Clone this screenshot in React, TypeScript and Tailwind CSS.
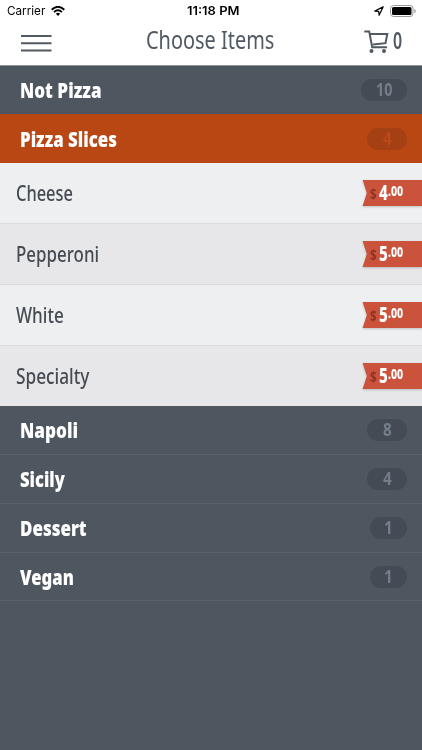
import { useLayoutEffect, useRef, useState } from 'react';

type FitProps = { text: string; width: number; className?: string };

// Condenses a label horizontally so that it fills the given width.
function Fit({ text, width, className = '' }: FitProps) {
  const ref = useRef<HTMLSpanElement>(null);
  const [scale, setScale] = useState(1);
  useLayoutEffect(() => {
    if (ref.current) setScale(width / ref.current.offsetWidth);
  }, [text, width]);
  return (
    <span className={'block shrink-0 whitespace-nowrap ' + className} style={{ width }}>
      <span ref={ref} className="inline-block origin-left" style={{ transform: `scaleX(${scale})` }}>
        {text}
      </span>
    </span>
  );
}

type Category = { name: string; width: number; count: string; row: string; badge: string; countWidth: number };

const before: Category[] = [
  { name: 'Not Pizza', width: 82, count: '10', row: 'h-12 bg-[#4e565f]', badge: 'w-[46px] bg-[#444b54] text-[#747e89]', countWidth: 16 },
  { name: 'Pizza Slices', width: 97, count: '4', row: 'h-[49px] bg-[#b94714]', badge: 'w-[40px] bg-[#a44014] text-[#bd4918]', countWidth: 9 },
];

const after: Category[] = [
  { name: 'Napoli', width: 58, count: '8', row: 'h-[49px] border-b border-[#59616a]', badge: 'w-[40px] bg-[#444b54] text-[#747e89]', countWidth: 9 },
  { name: 'Sicily', width: 45, count: '4', row: 'h-[49px] border-b border-[#59616a]', badge: 'w-[40px] bg-[#444b54] text-[#747e89]', countWidth: 9 },
  { name: 'Dessert', width: 67, count: '1', row: 'h-[49px] border-b border-[#59616a]', badge: 'w-[37px] bg-[#444b54] text-[#747e89]', countWidth: 9 },
  { name: 'Vegan', width: 54, count: '1', row: 'h-12 border-b border-[#59616a]', badge: 'w-[37px] bg-[#444b54] text-[#747e89]', countWidth: 9 },
];

const items = [
  { name: 'Cheese', width: 57, dollars: '4', row: 'h-[61px] bg-[#eeeff1] border-b border-[#dadbdd]' },
  { name: 'Pepperoni', width: 83, dollars: '5', row: 'h-[61px] bg-[#e7e7e9] border-b border-[#d9dadc]' },
  { name: 'White', width: 48, dollars: '5', row: 'h-[61px] bg-[#eeeff1] border-b border-[#dadbdd]' },
  { name: 'Specialty', width: 73, dollars: '5', row: 'h-[60px] bg-[#e7e7e9]' },
];

function CategoryRow({ c }: { c: Category }) {
  return (
    <div className={'flex items-center justify-between pl-5 pr-[15px] ' + c.row}>
      <Fit text={c.name} width={c.width} className="text-[21px] leading-[30px] font-black text-white" />
      <span className={'flex h-[22px] items-center justify-center rounded-full ' + c.badge}>
        <Fit text={c.count} width={c.countWidth} className="text-[17px] leading-[22px] font-bold" />
      </span>
    </div>
  );
}

function PriceTag({ dollars }: { dollars: string }) {
  return (
    <div className="h-[26px] w-[60px] drop-shadow-[0_1px_1px_rgba(0,0,0,0.2)]">
      <div className="flex h-[26px] items-start bg-[#cb523b] pl-2 [clip-path:polygon(1%_0,100%_0,100%_100%,1%_100%,8%_50%)]">
        <Fit text="$" width={7} className="mt-1 text-[15px] leading-[18px] font-bold text-[#8b3526]" />
        <Fit text={dollars} width={9} className="ml-[1.5px] text-[22px] leading-[23px] font-extrabold text-white" />
        <Fit text=".00" width={15} className="mt-px text-[14px] leading-[19px] font-extrabold text-white" />
      </div>
    </div>
  );
}

export default function App() {
  return (
    <div className="flex h-[750px] w-[422px] flex-col overflow-hidden bg-[#4e565f] font-['Noto_Sans',sans-serif]">
      <header className="h-[66px] shrink-0 border-b border-[#8e9598] bg-white">
        <div className="grid h-[22px] grid-cols-3 items-center pl-[7px] pr-[6px] font-['Inter',sans-serif] text-black">
          <div className="flex items-center gap-[6px]">
            <Fit text="Carrier" width={38} className="text-[12px] leading-4" />
            <svg className="h-[10px] w-[14px]" viewBox="0 0 14 10" fill="none" stroke="currentColor">
              <path d="M.7 3.7Q7-2 13.3 3.7M3 6.1Q7 2.6 11 6.1" strokeWidth="1.9" />
              <path d="M4.9 7.7Q7 6 9.1 7.7L7 9.9Z" fill="currentColor" stroke="none" />
            </svg>
          </div>
          <div className="flex justify-center pl-1">
            <Fit text="11:18 PM" width={53} className="text-[12px] leading-4 font-semibold" />
          </div>
          <div className="flex items-center justify-end gap-[6px]">
            <svg className="h-[10px] w-[10px]" viewBox="0 0 10 10" fill="none" stroke="currentColor" strokeWidth="1.2" strokeLinejoin="round">
              <path d="M9.2.8.8 5.1 4.7 5.4 5.1 9.2Z" />
            </svg>
            <svg className="h-3 w-[26px]" viewBox="0 0 26 12">
              <rect x=".5" y=".5" width="22.5" height="11" rx="3" fill="white" stroke="#999" />
              <rect x="2" y="2" width="19.5" height="8" rx="1.5" />
              <path d="M24.3 4Q25.8 4.3 25.8 6T24.3 8Z" fill="#999" />
            </svg>
          </div>
        </div>
        <div className="flex h-[43px] items-start justify-between pl-5 pr-5 text-[#515962]">
          <svg className="mt-[12px] h-[18px] w-[93px] shrink-0" viewBox="0 0 93 18" stroke="currentColor" strokeWidth="2">
            <path d="M1 2H31.5M1 9.2H31.5M1 16.4H31.5" />
          </svg>
          <Fit text="Choose Items" width={128} className="text-[26px] leading-[35px] font-normal" />
          <div className="flex w-[95px] items-start justify-end gap-1">
            <svg className="mt-[8px] h-[24px] w-[25px]" viewBox="0 0 25 24" fill="none" stroke="currentColor" strokeWidth="2">
              <path d="M.3 1.4H5.2L8.2 17.2H23M6 4H23.3L21.5 13.2L9 14.5" />
              <circle cx="7.5" cy="21" r="2" fill="currentColor" stroke="none" />
              <circle cx="20" cy="21" r="2" fill="currentColor" stroke="none" />
            </svg>
            <Fit text="0" width={9} className="mt-[3px] text-[23px] leading-[30px] font-semibold" />
          </div>
        </div>
      </header>
      <nav className="flex flex-col">
        {before.map((c) => <CategoryRow key={c.name} c={c} />)}
        <div>
          {items.map((item) => (
            <div key={item.name} className={'flex items-center justify-between pl-4 ' + item.row}>
              <Fit text={item.name} width={item.width} className="text-[21px] leading-[30px] font-medium text-[#454b52]" />
              <PriceTag dollars={item.dollars} />
            </div>
          ))}
        </div>
        {after.map((c) => <CategoryRow key={c.name} c={c} />)}
      </nav>
    </div>
  );
}
